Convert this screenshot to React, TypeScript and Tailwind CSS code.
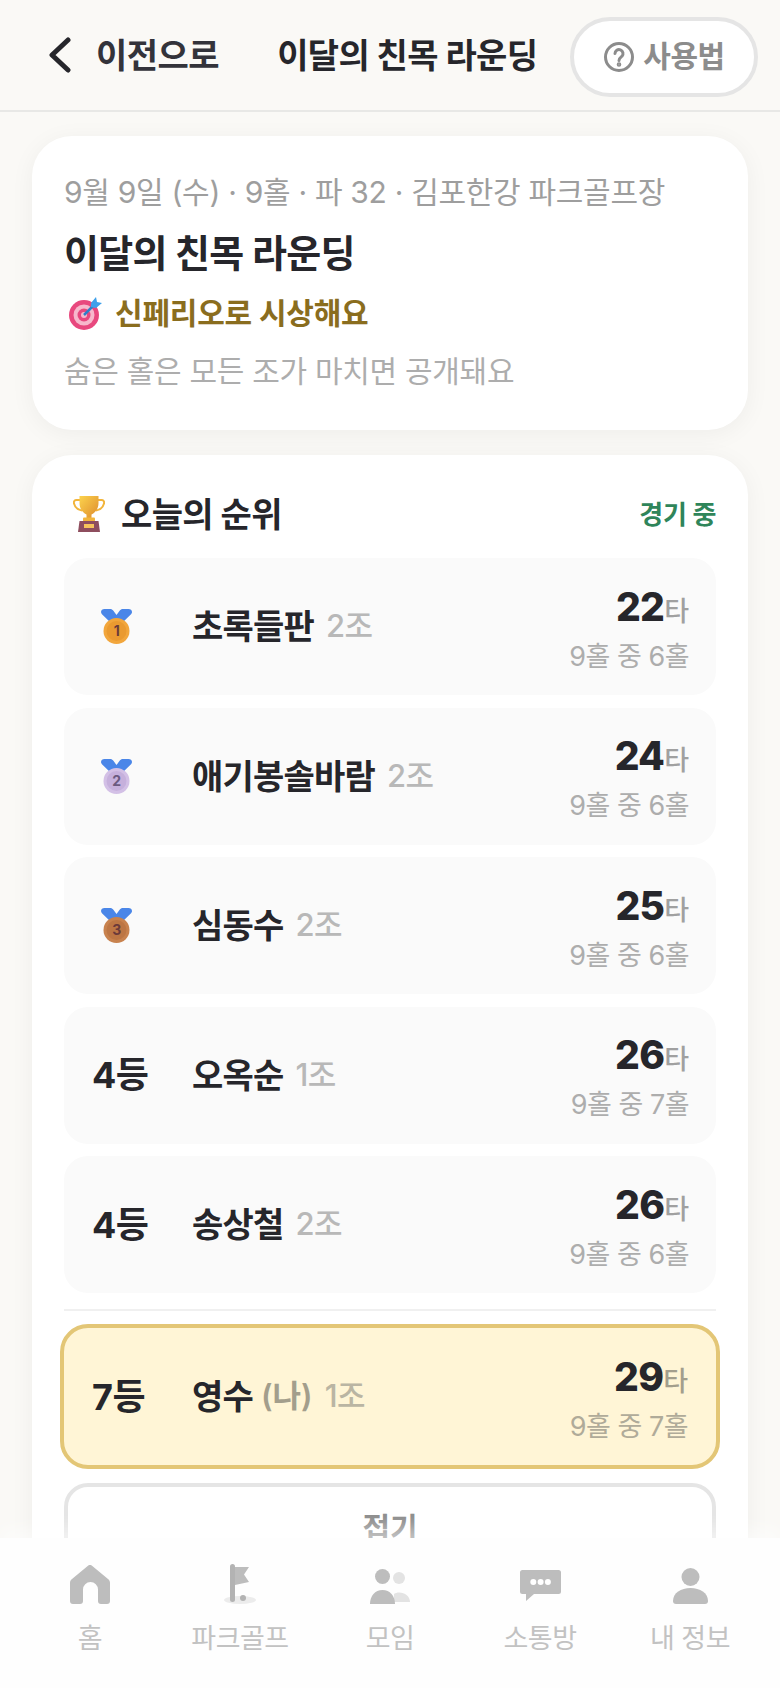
import React from 'react';

const FONT = 'font-[Inter,"Noto_Sans_CJK_KR","Noto_Sans",sans-serif]';

interface Player {
  rank: string;
  medal?: 1 | 2 | 3;
  name: string;
  group: string;
  score: number;
  holes: string;
}

const players: Player[] = [
  { rank: '1', medal: 1, name: '초록들판', group: '2조', score: 22, holes: '9홀 중 6홀' },
  { rank: '2', medal: 2, name: '애기봉솔바람', group: '2조', score: 24, holes: '9홀 중 6홀' },
  { rank: '3', medal: 3, name: '심동수', group: '2조', score: 25, holes: '9홀 중 6홀' },
  { rank: '4등', name: '오옥순', group: '1조', score: 26, holes: '9홀 중 7홀' },
  { rank: '4등', name: '송상철', group: '2조', score: 26, holes: '9홀 중 6홀' },
];

function Medal({ kind }: { kind: 1 | 2 | 3 }) {
  const fill = kind === 1 ? '#f2a63c' : kind === 2 ? '#d3c0e6' : '#c8824e';
  const rim = kind === 1 ? '#ea9a30' : kind === 2 ? '#c6b0dc' : '#bd7644';
  const digit = kind === 2 ? '#6b5a80' : '#6b3a3a';
  return (
    <svg width="31" height="35" viewBox="0 0 31 35">
      <path d="M0 3C0 1 1.500 0 3.500 0H9c1.500 0 2.500.6 3.200 1.600L15.500 6l3.300-4.400C19.500.6 20.500 0 22 0h5.500c2 0 3.500 1 3.500 3 0 1-.5 1.800-1.200 2.500L21 14H10L1.200 5.500C.5 4.800 0 4 0 3z" fill="#4a86e8" />
      <circle cx="15.500" cy="22" r="13" fill={fill} />
      <circle cx="15.500" cy="22" r="10" fill={rim} />
      <text x="15.500" y="27" textAnchor="middle" fontSize="14" fontWeight="700" fill={digit} fontFamily="Inter, sans-serif">{kind}</text>
    </svg>
  );
}

function Trophy() {
  return (
    <svg width="32" height="36" viewBox="0 0 32 36">
      <path d="M7 4H3.500C1.500 4 .5 5.500 1 7.500 2 11.500 5 14 9 14.500M25 4h3.500c2 0 3 1.500 2.500 3.500-1 4-4 6.500-8 7" fill="none" stroke="#f2b53c" strokeWidth="2" />
      <path d="M6.500 0h19v7c0 6-3.500 10-7 11.500V23h-5v-4.500C10 17 6.500 13 6.500 7z" fill="url(#cup)" />
      <rect x="10" y="21.500" width="12" height="4" rx="1" fill="#f2b53c" />
      <path d="M6.500 25h19l1.500 11H5z" fill="#8e4e5e" />
      <rect x="11" y="28" width="10" height="4" fill="#f7c35c" />
      <defs>
        <linearGradient id="cup" x1="0" y1="0" x2="1" y2="1">
          <stop offset="0" stopColor="#fcd34d" />
          <stop offset="1" stopColor="#dd8a2c" />
        </linearGradient>
      </defs>
    </svg>
  );
}

function Dart() {
  return (
    <svg width="34" height="34" viewBox="0 0 34 34">
      <circle cx="15" cy="19" r="15" fill="#e8487e" />
      <circle cx="15" cy="19" r="10.500" fill="#f7b8cc" />
      <circle cx="15" cy="19" r="6.500" fill="#e8487e" />
      <circle cx="15" cy="19" r="3" fill="#f7b8cc" />
      <path d="M15 19L26 8" stroke="#2f7fc8" strokeWidth="2.500" />
      <path d="M22 7l5-6 1 5 5 1-6 5-5-1z" fill="#3ea0ea" />
    </svg>
  );
}

function HomeIcon() {
  return (
    <svg width="40" height="39" viewBox="0 0 40 39">
      <path fillRule="evenodd" d="M18 .8a3 3 0 014 0L38 14c1.300 1.100 2 2.300 2 4v18a3 3 0 01-3 3h-6a3 3 0 01-3-3V24.500a7.500 7.500 0 00-15 0V36a3 3 0 01-3 3H3a3 3 0 01-3-3V18c0-1.700.7-2.900 2-4z" fill="#bdbdbd" />
    </svg>
  );
}

function FlagIcon() {
  return (
    <svg width="32" height="40" viewBox="0 0 32 40">
      <ellipse cx="16" cy="36" rx="16" ry="4" fill="#ececec" />
      <path d="M11 3h14l-5 7.500 5 7.500-14 3z" fill="#bdbdbd" />
      <rect x="6" y="0" width="5" height="38" rx="2.500" fill="#b3b3b3" />
      <circle cx="19" cy="34" r="3" fill="#b3b3b3" />
    </svg>
  );
}

function GroupIcon() {
  return (
    <svg width="40" height="35" viewBox="0 0 40 35">
      <circle cx="29" cy="9" r="6" fill="#e3e3e3" />
      <path d="M24 33V25c1.500-1 3-1.500 5-1.500 6 0 11 4 11 9.500z" fill="#e3e3e3" />
      <circle cx="12.500" cy="7.500" r="7.500" fill="#bdbdbd" />
      <path d="M0 35c0-8 5-14 12.500-14S25 27 25 35z" fill="#bdbdbd" />
    </svg>
  );
}

function ChatIcon() {
  return (
    <svg width="41" height="31" viewBox="0 0 41 31">
      <path d="M2.500 0h36A2.500 2.500 0 0141 2.500v19a2.500 2.500 0 01-2.500 2.500H14L6 31v-7H2.500A2.500 2.500 0 010 21.500v-19A2.500 2.500 0 012.500 0z" fill="#bdbdbd" />
      <circle cx="13.300" cy="12" r="3" fill="#fff" />
      <circle cx="20.600" cy="12" r="3" fill="#fff" />
      <circle cx="27.900" cy="12" r="3" fill="#fff" />
    </svg>
  );
}

function PersonIcon() {
  return (
    <svg width="35" height="36" viewBox="0 0 35 36">
      <circle cx="17.500" cy="9" r="9" fill="#bdbdbd" />
      <path d="M0 33c0-8 8-13 17.500-13S35 25 35 33a3 3 0 01-3 3H3a3 3 0 01-3-3z" fill="#bdbdbd" />
    </svg>
  );
}

const navItems = [
  { label: '홈', icon: <HomeIcon /> },
  { label: '파크골프', icon: <FlagIcon /> },
  { label: '모임', icon: <GroupIcon /> },
  { label: '소통방', icon: <div className="mb-[3px]"><ChatIcon /></div> },
  { label: '내 정보', icon: <PersonIcon /> },
];

function Row({ p }: { p: Player }) {
  return (
    <div className="h-[137px] rounded-[24px] bg-[#fafafa] flex items-center justify-between pl-[28px] pr-[27px]">
      <div className="flex items-center">
        <div className="w-[100px] text-[36px] font-bold text-[#26262b] tracking-[-0.5px]">
          {p.medal ? <div className="pl-[9px]"><Medal kind={p.medal} /></div> : p.rank}
        </div>
        <span className="text-[34px] font-bold text-[#26262b] tracking-[-0.8px]">{p.name}</span>
        <span className="ml-[12px] text-[31px] font-medium text-[#b8b8b8] tracking-[-0.5px]">{p.group}</span>
      </div>
      <div className="flex flex-col items-end pt-[6px]">
        <div className="flex items-baseline leading-[46px]">
          <span className="text-[39px] font-extrabold text-[#26262b] tracking-[-0.8px]">{p.score}</span>
          <span className="text-[27px] font-medium text-[#a0a0a0]">타</span>
        </div>
        <span className="mt-[3px] text-[27px] leading-[38px] text-[#adadad] tracking-[-0.5px]">{p.holes}</span>
      </div>
    </div>
  );
}

export default function App() {
  return (
    <div className={`relative h-[1688px] w-[780px] overflow-hidden bg-[#faf9f6] ${FONT}`}>
      {/* Header */}
      <header className="h-[112px] border-b-2 border-[#e8e8e6] flex items-center pl-[47px] pr-[22px]">
        <svg width="26" height="36" viewBox="0 0 26 36" fill="none" stroke="#26262b" strokeWidth="5" strokeLinecap="round" strokeLinejoin="round">
          <path d="M21 3L5 18l16 15" />
        </svg>
        <span className="ml-[23px] text-[34px] font-semibold text-[#33333a] tracking-[-0.5px]">이전으로</span>
        <span className="ml-[58px] text-[34px] font-bold text-[#26262b] tracking-[-0.6px]">이달의 친목 라운딩</span>
        <button className="ml-auto mt-[3px] h-[80px] w-[188px] rounded-[40px] border-[4px] border-[#e5e5e5] bg-white flex items-center justify-center gap-[8px]">
          <svg width="32" height="32" viewBox="0 0 32 32" fill="none" stroke="#8c8c8c" strokeWidth="3">
            <circle cx="16" cy="16" r="13.500" />
            <path d="M12 12.500a4 4 0 117 2.700c-1.500 1.300-3 2-3 4.300" strokeLinecap="round" />
            <circle cx="16" cy="23.500" r="0.800" fill="#8c8c8c" />
          </svg>
          <span className="text-[30px] font-semibold text-[#8c8c8c] tracking-[-0.5px]">사용법</span>
        </button>
      </header>

      {/* Round info */}
      <section className="mx-[32px] mt-[24px] h-[294px] rounded-[40px] bg-white shadow-[0_4px_24px_rgba(0,0,0,0.05)] pl-[32px] pt-[35px]">
        <p className="text-[30px] leading-[42px] text-[#9e9e9e] tracking-[-0.3px]">9월 9일 (수) · 9홀 · 파 32 · 김포한강 파크골프장</p>
        <h1 className="mt-[18px] text-[38px] leading-[44px] font-bold text-[#26262b] tracking-[-0.7px]">이달의 친목 라운딩</h1>
        <div className="mt-[17px] flex items-center gap-[12px] pl-[5px]">
          <Dart />
          <span className="text-[30px] leading-[42px] font-bold text-[#8a6d1e] tracking-[-0.2px]">신페리오로 시상해요</span>
        </div>
        <p className="mt-[16px] text-[30px] leading-[42px] text-[#adadad] tracking-[-0.3px]">숨은 홀은 모든 조가 마치면 공개돼요</p>
      </section>

      {/* Leaderboard */}
      <section className="mx-[32px] mt-[25px] rounded-[40px] bg-white shadow-[0_4px_24px_rgba(0,0,0,0.05)] px-[32px] pt-[37px] pb-[40px]">
        <div className="flex items-center justify-between h-[44px] mb-[22px]">
          <div className="flex items-center gap-[16px] pl-[9px]">
            <Trophy />
            <h2 className="text-[34px] font-bold text-[#26262b] tracking-[-0.6px]">오늘의 순위</h2>
          </div>
          <span className="text-[26px] font-bold text-[#2f855a] tracking-[-0.3px]">경기 중</span>
        </div>
        <div className="flex flex-col gap-[12.5px]">
          {players.map((p) => <Row key={p.name} p={p} />)}
        </div>
        <div className="mt-[16px] h-[2px] bg-[#f0f0f0]" />
        <div className="mt-[13px] -mx-[4px] h-[145px] rounded-[28px] border-[4px] border-[#e3c676] bg-[#fff5d6] flex items-center justify-between pl-[28px] pr-[28px]">
          <div className="flex items-center">
            <div className="w-[100px] text-[36px] font-bold text-[#26262b] tracking-[-0.5px]">7등</div>
            <span className="text-[34px] font-bold text-[#26262b] tracking-[-0.8px]">영수</span>
            <span className="ml-[8px] text-[31px] font-semibold text-[#a39e8c]">(나)</span>
            <span className="ml-[12px] text-[31px] font-medium text-[#bab5a3] tracking-[-0.5px]">1조</span>
          </div>
          <div className="flex flex-col items-end pt-[6px]">
            <div className="flex items-baseline leading-[46px]">
              <span className="text-[39px] font-extrabold text-[#26262b] tracking-[-0.8px]">29</span>
              <span className="text-[27px] font-medium text-[#a39e8c]">타</span>
            </div>
            <span className="mt-[3px] text-[27px] leading-[38px] text-[#b0ab99] tracking-[-0.5px]">9홀 중 7홀</span>
          </div>
        </div>
        <button className="mt-[14px] w-full h-[90px] rounded-[24px] border-[4px] border-[#e5e5e5] bg-white text-[30px] font-bold text-[#8c8c8c]">접기</button>
      </section>

      {/* Bottom tab bar */}
      <nav className="absolute bottom-0 left-0 right-0 h-[150px] bg-[#fefefe] shadow-[0_-10px_16px_rgba(255,255,255,0.5)] px-[15px] grid grid-cols-5">
        {navItems.map((item) => (
          <div key={item.label} className="flex flex-col items-center">
            <div className="mt-[22px] h-[44px] flex items-end justify-center">{item.icon}</div>
            <span className="mt-[16px] text-[27px] leading-[38px] text-[#c2c2c2] tracking-[-0.5px]">{item.label}</span>
          </div>
        ))}
      </nav>
    </div>
  );
}
